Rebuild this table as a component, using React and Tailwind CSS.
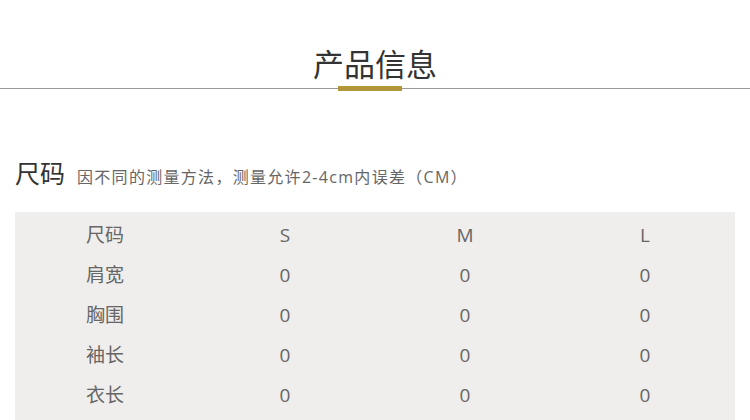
const rows = [
  ["尺码", "S", "M", "L"],
  ["肩宽", "0", "0", "0"],
  ["胸围", "0", "0", "0"],
  ["袖长", "0", "0", "0"],
  ["衣长", "0", "0", "0"],
];

export default function App() {
  return (
    <div className="w-[750px] h-[420px] overflow-hidden bg-white font-['Open_Sans','Noto_Sans_CJK_SC',sans-serif]">
      {/* section title */}
      <div className="relative h-[89px] border-b border-[#999] pt-[44px] text-center">
        <h2 className="text-[31px] leading-[40px] text-[#333]">产品信息</h2>
        <span className="absolute left-[338px] top-[86px] h-[5px] w-[64px] bg-[#b3953a]" />
      </div>

      <div className="flex items-baseline gap-[12px] px-[15px] pt-[69px]">
        <h3 className="text-[25px] leading-[30px] text-[#333]">尺码</h3>
        <p className="text-[16px] tracking-[1.3px] text-[#666]">因不同的测量方法，测量允许2-4cm内误差（CM）</p>
      </div>

      <div className="mx-[15px] mt-[23px] bg-[#f0eeec] pt-[3px] pb-[10px]">
        {rows.map((row, i) => (
          <div key={i} className="grid h-[40px] grid-cols-4 items-center text-center text-[19px] text-[#666]">
            {row.map((cell, j) => (
              <span key={j}>{cell}</span>
            ))}
          </div>
        ))}
      </div>
    </div>
  );
}
